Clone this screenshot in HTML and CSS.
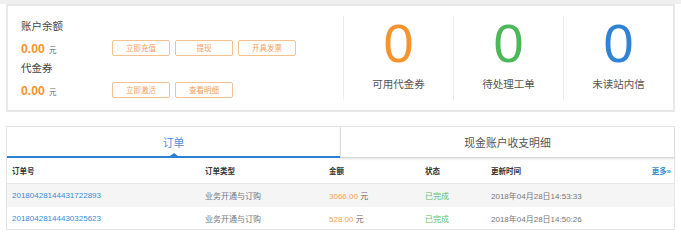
FILE: index.html
```html
<!DOCTYPE html>
<html lang="zh-CN">
<head>
<meta charset="utf-8">
<title>账户概览</title>
<link rel="stylesheet" href="styles.css">
</head>
<body>
<div class="band"></div>
<section class="summary">
  <div class="account">
    <div class="label">账户余额</div>
    <div class="amount-row">
      <div class="amount"><b>0.00</b><span class="unit">元</span></div>
      <div class="btns">
        <a class="btn">立即充值</a>
        <a class="btn">提现</a>
        <a class="btn">开具发票</a>
      </div>
    </div>
    <div class="label">代金券</div>
    <div class="amount-row">
      <div class="amount"><b>0.00</b><span class="unit">元</span></div>
      <div class="btns">
        <a class="btn">立即激活</a>
        <a class="btn">查看明细</a>
      </div>
    </div>
  </div>
  <div class="stats">
    <div class="stat"><div class="num orange">0</div><div class="stat-label">可用代金券</div></div>
    <div class="stat"><div class="num green">0</div><div class="stat-label">待处理工单</div></div>
    <div class="stat"><div class="num blue">0</div><div class="stat-label">未读站内信</div></div>
  </div>
</section>

<section class="orders">
  <div class="tabs">
    <div class="tab active">订单</div>
    <div class="tab">现金账户收支明细</div>
  </div>
  <div class="row head">
    <span>订单号</span><span>订单类型</span><span>金额</span><span>状态</span><span>更新时间</span><a class="more">更多»</a>
  </div>
  <div class="row odd">
    <a class="link">20180428144431722893</a><span class="grey">业务开通与订购</span><span><em class="money">3066.00</em> 元</span><span class="done">已完成</span><span class="grey">2018年04月28日14:53:33</span><span></span>
  </div>
  <div class="row">
    <a class="link">20180428144430325623</a><span class="grey">业务开通与订购</span><span><em class="money">528.00</em> 元</span><span class="done">已完成</span><span class="grey">2018年04月28日14:50:26</span><span></span>
  </div>
</section>
</body>
</html>
```
FILE: styles.css
```css
* { box-sizing: border-box; }
body {
  margin: 0;
  background: #fff;
  font-family: "Liberation Sans", "Noto Sans CJK SC", sans-serif;
  color: #333;
}
a { text-decoration: none; cursor: pointer; }

.band { height: 4px; background: #efefef; }

.summary {
  margin: 0 6px;
  height: 108px;
  border: 2px solid #e8e8e8;
  border-top-width: 2px;
  display: flex;
  background: #fff;
}
.account {
  width: 335px;
  padding: 10px 0 0 13px;
}
.label {
  line-height: 21px;
  font-size: 10.5px;
  color: #444;
}
.amount-row {
  height: 21px;
  display: flex;
  align-items: center;
}
.amount {
  width: 91px;
  color: #f7922c;
}
.amount b { font-size: 12.3px; font-weight: bold; }
.unit { font-size: 7.5px; color: #666; margin-left: 4px; }
.btns { display: flex; gap: 5px; }
.btn {
  width: 58px;
  height: 16px;
  border: 1px solid #f6c190;
  border-radius: 2px;
  color: #f5a05a;
  font-size: 7.5px;
  display: flex;
  align-items: center;
  justify-content: center;
}

.stats {
  flex: 1;
  display: flex;
  padding: 10px 0 10px;
}
.stat {
  flex: 1;
  border-left: 1px solid #ececec;
  text-align: center;
}
.num {
  font-size: 54px;
  line-height: 54px;
  font-weight: normal;
}
.orange { color: #f7922c; }
.green { color: #4cb85a; }
.blue { color: #2f82d6; }
.stat-label {
  margin-top: 4px;
  line-height: 20px;
  font-size: 10.5px;
  color: #555;
}

.orders {
  margin: 14px 6px 0;
  border: 1px solid #e6e6e6;
}
.tabs {
  display: flex;
  height: 31px;
}
.tab {
  flex: 1;
  display: flex;
  align-items: center;
  justify-content: center;
  font-size: 10.8px;
  color: #555;
  position: relative;
}
.tab.active {
  color: #4a90d9;
  border-bottom: 2px solid #2b80d5;
}
.tab.active::after {
  content: "";
  position: absolute;
  left: 50%;
  bottom: 0;
  margin-left: -4px;
  border-left: 4px solid transparent;
  border-right: 4px solid transparent;
  border-bottom: 3px solid #2b80d5;
}
.tab:not(.active) {
  border-left: 1px solid #ddd;
  border-bottom: 1px solid #d8d8d8;
  box-shadow: 0 1px 2px rgba(0,0,0,0.12);
}

.row {
  display: grid;
  grid-template-columns: 193px 124px 96px 66px 1fr auto;
  align-items: center;
  padding: 0 3px 0 5px;
  height: 22px;
  font-size: 8px;
  color: #666;
}
.row.head {
  height: 26px;
  font-size: 7.5px;
  font-weight: bold;
  color: #333;
  border-bottom: 1px solid #e8e8e8;
}
.row.odd { background: #f5f5f5; height: 23px; }
.row em { font-style: normal; }
.link { color: #3d89d5; }
.grey { color: #777; }
.money { color: #f5a05a; }
.done { color: #5fbf5f; }
.more { color: #3d89d5; font-size: 7.5px; }
```
